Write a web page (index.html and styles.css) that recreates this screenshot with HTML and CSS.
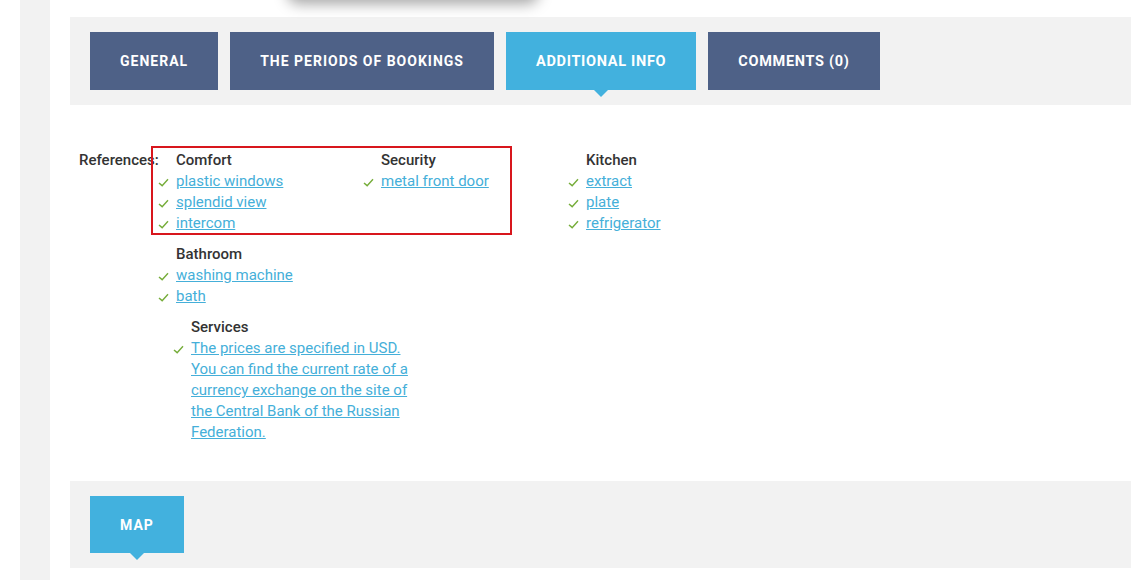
FILE: index.html
```html
<!DOCTYPE html>
<html lang="en">
<head>
    <meta charset="UTF-8">
    <meta name="viewport" content="width=device-width, initial-scale=1.0">
    <title>Additional info</title>
    <link rel="stylesheet" href="styles.css">
</head>
<body>
    <div class="dropdown-shadow"></div>
    <div class="page">
        <div class="side"></div>
        <div class="main">
            <div class="tab-panel">
                <a class="tab" href="#">General</a>
                <a class="tab" href="#">The periods of bookings</a>
                <a class="tab tab-narrow active" href="#">Additional info</a>
                <a class="tab tab-narrow" href="#">Comments (0)</a>
            </div>

            <div class="refs">
                <div class="refs-label">References:</div>
                <div class="refs-body">
                    <div class="groups">
                        <div class="group">
                            <div class="group-title">Comfort</div>
                            <div class="item"><svg class="check" viewBox="0 0 12 10"><path d="M1 5.5 L4.5 8.5 L11 1.5"/></svg><a href="#">plastic windows</a></div>
                            <div class="item"><svg class="check" viewBox="0 0 12 10"><path d="M1 5.5 L4.5 8.5 L11 1.5"/></svg><a href="#">splendid view</a></div>
                            <div class="item"><svg class="check" viewBox="0 0 12 10"><path d="M1 5.5 L4.5 8.5 L11 1.5"/></svg><a href="#">intercom</a></div>
                        </div>
                        <div class="group">
                            <div class="group-title">Security</div>
                            <div class="item"><svg class="check" viewBox="0 0 12 10"><path d="M1 5.5 L4.5 8.5 L11 1.5"/></svg><a href="#">metal front door</a></div>
                        </div>
                        <div class="group">
                            <div class="group-title">Kitchen</div>
                            <div class="item"><svg class="check" viewBox="0 0 12 10"><path d="M1 5.5 L4.5 8.5 L11 1.5"/></svg><a href="#">extract</a></div>
                            <div class="item"><svg class="check" viewBox="0 0 12 10"><path d="M1 5.5 L4.5 8.5 L11 1.5"/></svg><a href="#">plate</a></div>
                            <div class="item"><svg class="check" viewBox="0 0 12 10"><path d="M1 5.5 L4.5 8.5 L11 1.5"/></svg><a href="#">refrigerator</a></div>
                        </div>
                        <div class="group">
                            <div class="group-title">Bathroom</div>
                            <div class="item"><svg class="check" viewBox="0 0 12 10"><path d="M1 5.5 L4.5 8.5 L11 1.5"/></svg><a href="#">washing machine</a></div>
                            <div class="item"><svg class="check" viewBox="0 0 12 10"><path d="M1 5.5 L4.5 8.5 L11 1.5"/></svg><a href="#">bath</a></div>
                        </div>
                    </div>
                    <div class="group services">
                        <div class="group-title">Services</div>
                        <div class="item"><svg class="check" viewBox="0 0 12 10"><path d="M1 5.5 L4.5 8.5 L11 1.5"/></svg><a href="#">The prices are specified in USD. You can find the current rate of a currency exchange on the site of the Central Bank of the Russian Federation.</a></div>
                    </div>
                </div>
            </div>

            <div class="tab-panel map-panel">
                <a class="tab active" href="#">Map</a>
            </div>
        </div>
    </div>
    <div class="highlight"></div>
</body>
</html>
```

FILE: styles.css
```css
body {
    margin: 0;
    font-family: Roboto, "Liberation Sans", sans-serif;
    font-size: 15px;
    color: #333;
    background: white;
    overflow: hidden;
}
.dropdown-shadow {
    position: absolute;
    top: -30px;
    left: 287px;
    width: 252px;
    height: 30px;
    background: white;
    box-shadow: 0 4px 14px rgba(0, 0, 0, 0.35);
    border-radius: 0 0 12px 12px;
}
.page {
    display: flex;
    min-height: 580px;
}
.side {
    width: 30px;
    margin-left: 20px;
    background: #f2f2f2;
}
.main {
    flex: 1;
    padding: 17px 0 0 20px;
}
.tab-panel {
    display: flex;
    gap: 12px;
    background: #f2f2f2;
    padding: 15px 20px;
}
.tab {
    position: relative;
    display: flex;
    align-items: center;
    height: 58px;
    padding: 0 30px;
    background: #4e6187;
    color: white;
    font-weight: bold;
    font-size: 14px;
    letter-spacing: 1px;
    text-transform: uppercase;
    text-decoration: none;
}
.tab-narrow { font-size: 14.5px; letter-spacing: 0.7px; }
.tab.active { background: #42b1de; }
.tab.active::after {
    content: "";
    position: absolute;
    left: 50%;
    bottom: -7px;
    margin-left: -7px;
    border-left: 7px solid transparent;
    border-right: 7px solid transparent;
    border-top: 7px solid #42b1de;
}
.refs {
    display: flex;
    padding: 45px 0 0 9px;
    line-height: 21px;
}
.refs-label {
    width: 77px;
    font-weight: 500;
    white-space: nowrap;
}
.groups {
    display: flex;
    flex-wrap: wrap;
    width: 615px;
    row-gap: 10px;
}
.group { width: 205px; }
.group-title {
    padding-left: 20px;
    font-weight: 500;
}
.item {
    display: flex;
    align-items: flex-start;
}
.check {
    flex: none;
    width: 11px;
    height: 9px;
    margin: 7px 7px 0 2px;
    fill: none;
    stroke: #76ad3a;
    stroke-width: 1.6;
}
.item a {
    color: #45afd9;
    text-decoration: underline;
}
.services {
    width: 240px;
    margin: 10px 0 0 15px;
}
.map-panel {
    margin-top: 38px;
}
.map-panel .tab {
    height: 57px;
    padding: 0 30px;
}
.highlight {
    position: absolute;
    left: 151px;
    top: 146px;
    width: 357px;
    height: 85px;
    border: 2px solid #d8161d;
}
```
